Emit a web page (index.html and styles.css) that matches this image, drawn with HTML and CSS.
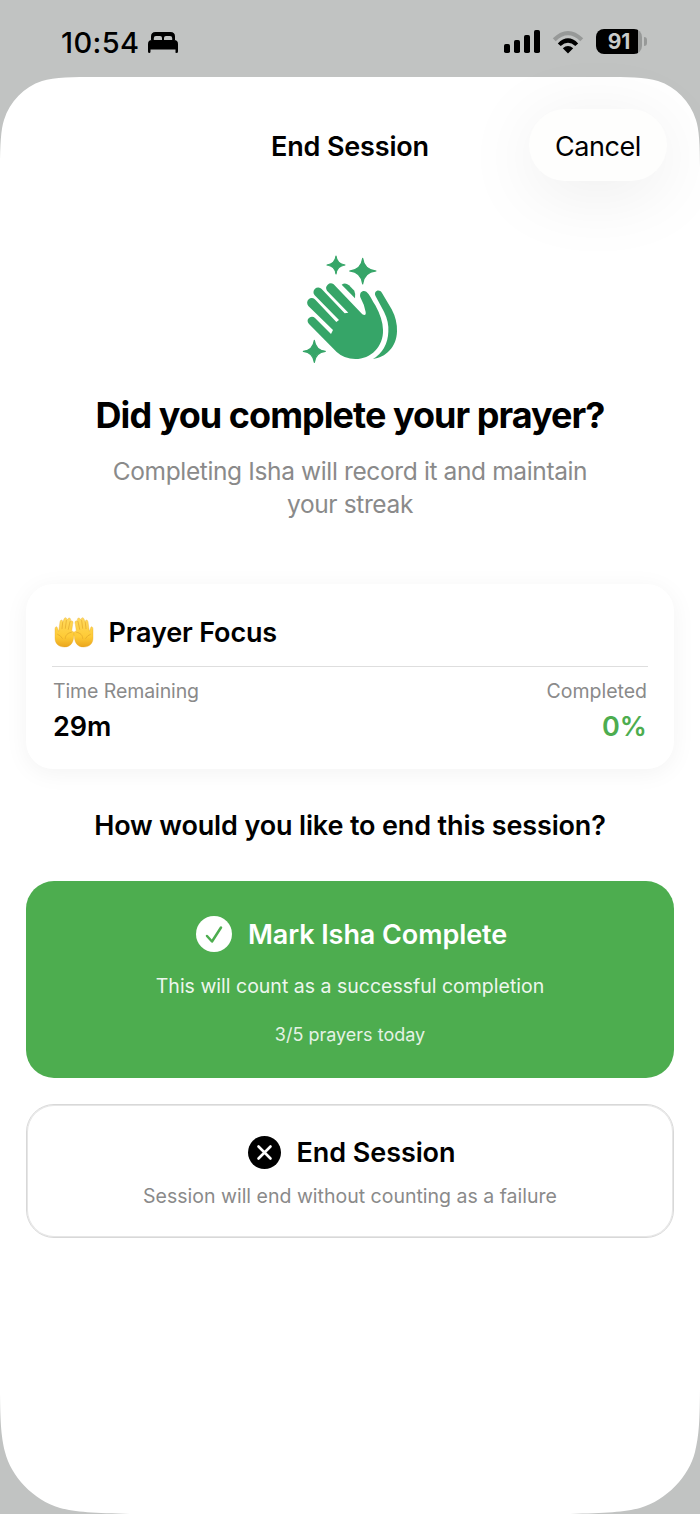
FILE: index.html
```html
<!DOCTYPE html>
<html lang="en">
<head>
<meta charset="utf-8">
<title>End Session</title>
<link rel="stylesheet" href="styles.css">
</head>
<body>
<div class="screen">
  <header class="status">
    <div class="status-left">
      <span class="time">10:54</span>
      <svg viewBox="0 0 30 21" width="30" height="21"><path d="M3 8V4.500Q3 0 7.500 0H22.500Q27 0 27 4.500V8H24.200V6.200Q24.200 4 22 4H18Q16 4 16 6V8H14V6Q14 4 12 4H8Q5.800 4 5.800 6.200V8ZM0 12Q0 8 4 8H26Q30 8 30 12V19.500Q30 21 28.500 21T27.500 19.500V17.500H2.500V19.500Q2.500 21 1.300 21T0 19.500Z"/></svg>
    </div>
    <div class="status-right">
      <svg viewBox="0 0 36 23" width="36" height="23"><rect y="14" width="6" height="9" rx="1.800"/><rect x="10" y="10" width="6" height="13" rx="1.800"/><rect x="20" y="5" width="6" height="18" rx="1.800"/><rect x="30" width="6" height="23" rx="1.800"/></svg>
      <svg viewBox="0 0 32 24" width="32" height="24"><path class="dim" d="M.8 8.300Q16-6.500 31.200 8.300L28.300 11.200Q16-.5 3.700 11.200Z"/><path d="M5.800 13.400Q16 3.200 26.200 13.400L23.300 16Q16 9.300 8.700 16ZM10.800 18.300Q16 13.500 21.200 18.300L16 23.500Z"/></svg>
      <span class="battery"><span class="level">91</span><i class="nub"></i></span>
    </div>
  </header>
  <main class="sheet">
    <svg class="sheet-shape" viewBox="0 77 700 1437" width="700" height="1437"><path d="M0 168C0 145 1 129 4 120C10 101 24 87 42 81C54 77 75 77 95 77H605C625 77 646 77 658 81C676 87 690 101 696 120C699 129 700 145 700 168V1383C700 1420 699 1436 695 1452C689 1476 667 1500 640 1508C625 1512 605 1513 570 1514H130C95 1513 75 1512 60 1508C33 1500 11 1476 5 1452C1 1436 0 1420 0 1383Z"/></svg>
    <nav class="nav">
      <h1 class="nav-title">End Session</h1>
      <button class="cancel">Cancel</button>
    </nav>
    <section class="hero">
      <svg class="hands" viewBox="0 0 360 390" width="120" height="130">
        <path d="M138 33Q141 57 165 60Q141 63 138 87Q135 63 111 60Q135 57 138 33ZM218 40Q222 74 258 78Q222 82 218 117Q214 82 179 78Q214 74 218 40ZM73 286Q77 316 106 319Q77 322 73 352Q69 322 40 319Q69 316 73 286Z" stroke="#36a568" stroke-width="3.500" stroke-linejoin="round"/>
        <path d="M155 119Q166 111 177 121L193 137Q197 145 195 160Z"/>
        <path d="M56 220A13 13 0 0 1 75 219L123 267L129 255L55 183A14 14 0 0 1 76 164L139 231L147 225L74 151A14 14 0 0 1 95 132L164 205L175 203L111 137A14 14 0 0 1 131 118L217 208Q229 214 227 201Q223 179 211 157C207 140 220 134 229 140C239 148 247 167 256 181Q278 221 279 254C281 305 242 342 196 342Q163 342 140 321L57 237Q49 228 56 220Z"/>
        <path d="M257 154C249 138 268 130 276 144L305 193Q322 225 321 259C320 307 286 338 249 342Q293 314 295 260Q297 230 282 200Z"/>
      </svg>
      <h2 class="question">Did you complete your prayer?</h2>
      <p class="lead">Completing Isha will record it and maintain<br>your streak</p>
    </section>
    <section class="card">
      <div class="card-head">
        <svg viewBox="0 0 120 96" width="40" height="32">
          <defs><linearGradient id="skin" x2="0" y2="1"><stop stop-color="#ffd95c"/><stop offset=".65" stop-color="#fecb36"/><stop offset="1" stop-color="#eaa51c"/></linearGradient>
          <g id="palm"><path fill="url(#skin)" stroke="#e3a62c" stroke-width="1" d="M3 42C2 32 9 28 11 38L14 46L18 17C20 9 27 11 26 19L30 9C33 2 40 5 38 13L42 8C47 3 52 8 49 16C55 12 59 17 56 25L53 46C60 44 62 52 59 62C58 82 48 93 31 93C13 93 3 82 3 66Z"/><path fill="none" stroke="#e0a42a" stroke-width="2" stroke-linecap="round" d="M26 20L24 38M37 14L34 37M48 17L43 40M52 49C40 51 34 58 34 67M11 55Q20 58 25 67"/></g></defs>
          <use href="#palm"/><use href="#palm" transform="matrix(-1 0 0 1 120 0)"/>
        </svg>
        <h3 class="card-title">Prayer Focus</h3>
      </div>
      <div class="stats">
        <div><p class="label">Time Remaining</p><p class="value">29m</p></div>
        <div class="right"><p class="label">Completed</p><p class="value green">0%</p></div>
      </div>
    </section>
    <h3 class="prompt">How would you like to end this session?</h3>
    <button class="option complete">
      <span class="row"><svg viewBox="0 0 36 36" width="36" height="36"><circle cx="18" cy="18" r="18" fill="#fff"/><path d="M11 20L16 25.500L25 11.500" fill="none" stroke="#4dad4f" stroke-width="2.500" stroke-linecap="round" stroke-linejoin="round"/></svg><span class="option-title">Mark Isha Complete</span></span>
      <span class="note">This will count as a successful completion</span>
      <span class="count">3/5 prayers today</span>
    </button>
    <button class="option end">
      <span class="row"><svg viewBox="0 0 33 33" width="33" height="33"><circle cx="16.500" cy="16.500" r="16.500"/><path d="M10.500 10.500L22.500 22.500M22.500 10.500L10.500 22.500" stroke="#fff" stroke-width="2.600" stroke-linecap="round"/></svg><span class="option-title">End Session</span></span>
      <span class="note">Session will end without counting as a failure</span>
    </button>
  </main>
</div>
</body>
</html>
```
FILE: styles.css
```css
* { box-sizing: border-box; }
body { margin: 0; background: #c1c3c2; font-family: Inter, "Liberation Sans", sans-serif; color: #000; }
h1, h2, h3, p { margin: 0; white-space: nowrap; }
button { font: inherit; color: inherit; border: 0; padding: 0; }
svg { display: block; flex: none; }
.screen { width: 700px; height: 1514px; overflow: hidden; }
.status { height: 77px; display: flex; justify-content: space-between; padding: 0 58px 0 61px; }
.status-left, .status-right { display: flex; align-items: center; height: 84px; }
.status-left { gap: 8px; }
.time { font-size: 29px; font-weight: 550; letter-spacing: .4px; }
.status-right { gap: 12px; padding-bottom: 1px; }
.dim { fill: #979998; }
.battery { position: relative; width: 46px; height: 25px; border-radius: 8px; background: linear-gradient(90deg, #000 42px, #979998 42px); }
.level { display: block; text-align: center; color: #c9cbca; font-size: 21px; line-height: 25px; font-weight: 700; }
.nub { position: absolute; left: 48px; top: 8px; width: 3px; height: 9px; border-radius: 0 4px 4px 0; background: #979998; }
.sheet { position: relative; height: 1437px; display: flex; flex-direction: column; isolation: isolate; padding: 0 26px; }
.sheet-shape { position: absolute; left: 0; top: 0; z-index: -1; fill: #fff; }
.nav { height: 104px; padding: 32px 7px 0; display: grid; grid-template-columns: 138px 1fr 138px; }
.nav-title { grid-column: 2; padding-top: 1px; font-size: 27px; line-height: 74px; font-weight: 600; letter-spacing: -.18px; text-align: center; }
.cancel { height: 72px; padding-top: 2px; border-radius: 36px; background: #fefefd; box-shadow: 0 12px 76px rgba(0,0,0,.08); font-size: 27px; letter-spacing: -.45px; }
.hero { padding-top: 64px; display: flex; flex-direction: column; align-items: center; }
.hands { fill: #36a568; }
.question { margin-top: 18px; font-size: 36px; line-height: 44px; font-weight: 700; letter-spacing: -.97px; }
.lead { margin-top: 18px; font-size: 24.500px; line-height: 33px; letter-spacing: -.37px; color: #8a8a8a; text-align: center; }
.card { margin-top: 63px; height: 185px; border-radius: 27px; background: #fff; box-shadow: 0 4px 24px rgba(0,0,0,.05); padding: 0 26px; }
.card-head { height: 83px; padding: 13px 0 0 1.5px; display: flex; align-items: center; gap: 15px; border-bottom: 1px solid #dedede; }
.card-title { padding-top: 2px; font-size: 27px; font-weight: 600; letter-spacing: -.15px; }
.stats { display: flex; justify-content: space-between; padding: 11px 1px 0; }
.right { text-align: right; }
.label { font-size: 19.500px; line-height: 26px; letter-spacing: -.1px; color: #8a8a8a; }
.right .label { letter-spacing: 0; }
.value { font-size: 27px; line-height: 34px; margin-top: 6px; font-weight: 600; }
.green { color: #4dad4f; }
.prompt { margin-top: 40px; font-size: 27px; line-height: 34px; font-weight: 600; letter-spacing: -.14px; text-align: center; }
.option { display: flex; flex-direction: column; align-items: center; border-radius: 28px; white-space: nowrap; }
.row { display: flex; align-items: center; gap: 16px; height: 36px; padding-left: 3px; }
.option-title { padding-top: 2px; font-size: 27px; line-height: 36px; font-weight: 600; letter-spacing: -.08px; }
.note { font-size: 19.500px; line-height: 26px; }
.complete { margin-top: 38px; height: 197px; padding-top: 35px; background: #4dad4f; color: #fff; }
.complete .note { margin-top: 21px; opacity: .9; }
.count { margin-top: 23px; font-size: 18px; line-height: 26px; opacity: .85; }
.end { margin-top: 26px; height: 134px; padding-top: 29px; border: 1px solid #d8d8d8; box-shadow: inset 0 0 0 1px #e6e6e6; background: #fff; }
.end .note { margin-top: 13px; color: #8a8a8a; }
```
